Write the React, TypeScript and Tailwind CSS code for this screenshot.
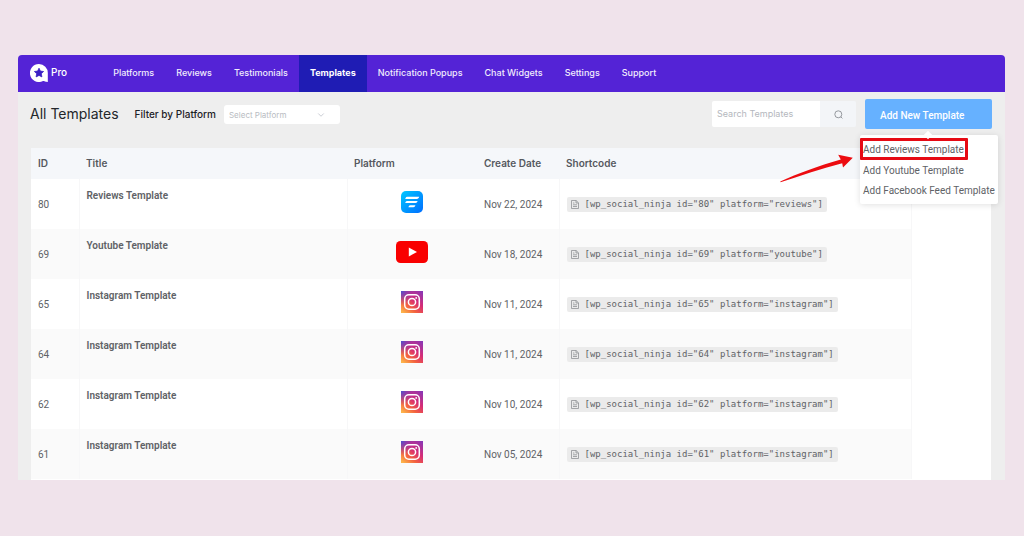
import { useState } from 'react'
import { ChevronDown } from 'lucide-react'
import clsx from 'clsx'

type Platform = 'reviews' | 'youtube' | 'instagram'

const navItems = [
  'Platforms',
  'Reviews',
  'Testimonials',
  'Templates',
  'Notification Popups',
  'Chat Widgets',
  'Settings',
  'Support',
]

const templates: { id: number; title: string; platform: Platform; date: string }[] = [
  { id: 80, title: 'Reviews Template', platform: 'reviews', date: 'Nov 22, 2024' },
  { id: 69, title: 'Youtube Template', platform: 'youtube', date: 'Nov 18, 2024' },
  { id: 65, title: 'Instagram Template', platform: 'instagram', date: 'Nov 11, 2024' },
  { id: 64, title: 'Instagram Template', platform: 'instagram', date: 'Nov 11, 2024' },
  { id: 62, title: 'Instagram Template', platform: 'instagram', date: 'Nov 10, 2024' },
  { id: 61, title: 'Instagram Template', platform: 'instagram', date: 'Nov 05, 2024' },
]

function Logo() {
  return (
    <svg width="18" height="18" viewBox="0 0 18 18" aria-hidden="true">
      <path d="M9 0a9 9 0 1 0 3.4 17.3c.9-.3 1.6-.3 2.4.1l3 .6V9A8.8 8.8 0 0 0 9 0Z" fill="#fff" />
      <path
        d="m9 4.2 1.4 2.9 3.2.4-2.3 2.2.6 3.2L9 11.4l-2.9 1.5.6-3.2-2.3-2.2 3.2-.4Z"
        fill="#3a1fc4"
        stroke="#3a1fc4"
        strokeWidth="0.8"
        strokeLinejoin="round"
      />
    </svg>
  )
}

function PlatformIcon({ platform }: { platform: Platform }) {
  if (platform === 'youtube') {
    return (
      <svg className="mx-auto" width="32" height="22" viewBox="0 0 32 22" role="img" aria-label="Youtube">
        <rect width="32" height="22" rx="4.5" fill="#f90000" />
        <path d="m12.8 6.6 8.2 4.4-8.2 4.4Z" fill="#fff" />
      </svg>
    )
  }

  if (platform === 'reviews') {
    return (
      <svg className="mx-auto" width="22" height="22" viewBox="0 0 22 22" role="img" aria-label="Reviews">
        <defs>
          <linearGradient id="reviews-bg" x1="0" y1="0" x2="1" y2="1">
            <stop offset="0" stopColor="#00c8ff" />
            <stop offset="1" stopColor="#006dff" />
          </linearGradient>
        </defs>
        <rect width="22" height="22" rx="5" fill="url(#reviews-bg)" />
        <g fill="#fff">
          <path d="M6.2 5.8h12l-.4 1a2 2 0 0 1-1.8 1.1H4.2l.4-1a1.8 1.8 0 0 1 1.6-1.1Z" />
          <path d="M6.2 10h10.4l-.4 1a2 2 0 0 1-1.8 1.1H4.2l.4-1A1.8 1.8 0 0 1 6.2 10Z" />
          <path d="M9.4 14.2h5l-.4 1a2 2 0 0 1-1.8 1.1H7.4l.4-1a1.8 1.8 0 0 1 1.6-1.1Z" />
        </g>
      </svg>
    )
  }

  return (
    <svg className="mx-auto" width="22" height="22" viewBox="0 0 22 22" role="img" aria-label="Instagram">
      <defs>
        <linearGradient id="ig-bg" x1="0.1" y1="1" x2="0.9" y2="0">
          <stop offset="0" stopColor="#fdb54a" />
          <stop offset="0.3" stopColor="#f3623f" />
          <stop offset="0.6" stopColor="#d62b76" />
          <stop offset="1" stopColor="#8c36b4" />
        </linearGradient>
        <radialGradient id="ig-corner" cx="0" cy="0" r="0.65">
          <stop offset="0" stopColor="#4a4fd0" />
          <stop offset="1" stopColor="#8a3ac0" stopOpacity="0" />
        </radialGradient>
      </defs>
      <rect width="22" height="22" fill="url(#ig-bg)" />
      <rect width="22" height="22" fill="url(#ig-corner)" />
      <rect x="3.7" y="3.7" width="14.6" height="14.6" rx="4.2" fill="none" stroke="#fff" strokeWidth="1.5" />
      <circle cx="11" cy="11" r="3.6" fill="none" stroke="#fff" strokeWidth="1.5" />
      <circle cx="15.2" cy="6.9" r="0.9" fill="#fff" />
    </svg>
  )
}

function DocumentIcon() {
  return (
    <svg width="8" height="9" viewBox="0 0 8 9" fill="none" stroke="#85878b" strokeWidth="0.7" aria-hidden="true">
      <path d="M.5.5h4.6l2.4 2.3v5.7h-7Z" />
      <path d="M5 .6V3h2.4M2 3h1.4M2 4.8h4M2 6.5h4" />
    </svg>
  )
}

function AddTemplateMenu() {
  return (
    <div className="relative ml-[9px] font-[Roboto,sans-serif] text-[10px]">
      <button type="button" className="block h-[30px] w-[127px] rounded-[2px] bg-[#66b1ff] pt-[3px] pl-[15px] text-left font-medium text-white">
        Add New Template
      </button>
      <div className="absolute top-[36px] -right-[6px] z-10 w-[138px] rounded-[2px] bg-white pt-[3px] pb-1 text-[#606266] shadow-[0_1px_6px_rgba(0,0,0,0.12)]">
        <span className="absolute -top-[3px] left-[65px] size-[6px] rotate-45 bg-white" />
        <ul className="whitespace-nowrap">
          <li className="flex h-[22px] w-[108px] rounded-[1px] border-[3px] border-[#e60a14]">
            <button type="button">Add Reviews Template</button>
          </li>
          <li className="flex h-5 px-[3px]">
            <button type="button">Add Youtube Template</button>
          </li>
          <li className="flex h-5 px-[3px]">
            <button type="button">Add Facebook Feed Template</button>
          </li>
        </ul>
        <svg className="absolute top-[18px] -left-[80px]" width="74" height="30" viewBox="0 0 74 30" aria-hidden="true">
          <path
            d="M.3 28.6 C18 20.5 38 13.2 60.8 6.6 L58.2 1.8 72.8 4.8 63 14.6 62.2 10.2 C40 15.8 20 23 .5 29.3Z"
            fill="#ec0c10"
          />
        </svg>
      </div>
    </div>
  )
}

function Toolbar() {
  const [search, setSearch] = useState('')

  return (
    <div className="flex h-[56px] items-start pr-[13px] pl-3">
      <h1 className="mt-3 text-[14px] leading-5 text-[#23272b]">All Templates</h1>
      <label htmlFor="platform" className="mt-3 ml-4 text-[10px] leading-5 font-medium text-[#1d2126]">
        Filter by Platform
      </label>
      <div className="relative mt-[13px] ml-2">
        <select
          id="platform"
          defaultValue=""
          className="block h-[19px] w-[116px] appearance-none rounded-[3px] bg-white px-[5px] text-[8px] text-[#b9bcc2]"
        >
          <option value="">Select Platform</option>
          <option value="reviews">Reviews</option>
          <option value="youtube">Youtube</option>
          <option value="instagram">Instagram</option>
        </select>
        <ChevronDown className="pointer-events-none absolute top-[5px] right-[14px] size-[10px] text-[#c0c4cc]" strokeWidth={2} />
      </div>

      <div className="mt-[9px] ml-auto flex h-[26px]">
        <input
          type="text"
          aria-label="Search Templates"
          placeholder="Search Templates"
          value={search}
          onChange={(e) => setSearch(e.target.value)}
          className="w-[108px] rounded-l-[2px] bg-white px-[5px] text-[9px] placeholder:text-[#b4b7bd]"
        />
        <button type="button" aria-label="Search" className="flex w-9 items-center justify-center rounded-r-[2px] bg-[#f3f5f8]">
          <svg width="9" height="9" viewBox="0 0 9 9" fill="none" stroke="#8b8e94" strokeWidth="0.9">
            <circle cx="4.3" cy="4.3" r="3.5" />
            <path d="m6.8 6.8 1.6 1.6" />
          </svg>
        </button>
      </div>
      <div className="mt-[7px]">
        <AddTemplateMenu />
      </div>
    </div>
  )
}

function TemplatesTable() {
  return (
    <table className="w-full table-fixed text-left text-[10px] text-[#606266]">
      <colgroup>
        <col className="w-[48px]" />
        <col />
        <col className="w-[130px]" />
        <col className="w-[82px]" />
        <col className="w-[352px]" />
        <col className="w-[80px]" />
      </colgroup>
      <thead>
        <tr className="h-[31px] bg-[#f5f7fa] text-[#56595f]">
          {['ID', 'Title', 'Platform', 'Create Date', 'Shortcode'].map((name) => (
            <th key={name} className="px-[7px] font-semibold whitespace-nowrap">{name}</th>
          ))}
          <th />
        </tr>
      </thead>
      <tbody className="font-[Roboto,sans-serif]">
        {templates.map((t, i) => {
          const cell = clsx('px-[7px]', i % 2 === 1 && 'bg-[#fafafa]')
          return (
            <tr key={t.id} className="h-[50px]">
              <td className={clsx(cell, 'border-r border-[#f7f7f8]')}>{t.id}</td>
              <td className={clsx(cell, 'border-r border-[#f7f7f8] pt-[9px] align-top font-semibold')}>{t.title}</td>
              <td className={clsx(cell, 'pb-1')}>
                <PlatformIcon platform={t.platform} />
              </td>
              <td className={clsx(cell, 'border-r border-[#f7f7f8] whitespace-nowrap')}>{t.date}</td>
              <td className={clsx(cell, 'border-r border-[#f7f7f8]')}>
                <span className="inline-flex h-[15px] items-center gap-1.5 rounded-[2px] bg-[#ebebeb] px-1 align-middle">
                  <DocumentIcon />
                  <code className="font-['DejaVu_Sans_Mono',monospace] text-[9px] leading-none whitespace-nowrap">
                    {`[wp_social_ninja id="${t.id}" platform="${t.platform}"]`}
                  </code>
                </span>
              </td>
              <td />
            </tr>
          )
        })}
      </tbody>
    </table>
  )
}

export default function App() {
  return (
    <div className="min-h-screen bg-[#f0e3eb] py-[55px] pr-[19px] pl-[18px] font-['Inter',sans-serif]">
      <div className="rounded-t-[4px] bg-[#eeeeee]">
        <header className="flex h-[37px] rounded-t-[4px] bg-[#5423d6] text-white">
          <a href="#" className="flex items-center gap-[3px] pb-0.5 pl-3 text-[10px] font-medium">
            <Logo />
            Pro
          </a>
          <nav className="ml-[35px] flex">
            {navItems.map((item) => (
              <a
                key={item}
                href="#"
                className={clsx(
                  'flex items-center px-[11px] pb-0.5 text-[9px] whitespace-nowrap',
                  item === 'Templates' ? 'bg-[#1f1cb4] font-bold' : 'font-medium text-[#f1ecfd]',
                )}
              >
                {item}
              </a>
            ))}
          </nav>
        </header>
        <Toolbar />
        <div className="pr-[14px] pl-[13px]">
          <div className="bg-white pb-px">
            <TemplatesTable />
          </div>
        </div>
      </div>
    </div>
  )
}
